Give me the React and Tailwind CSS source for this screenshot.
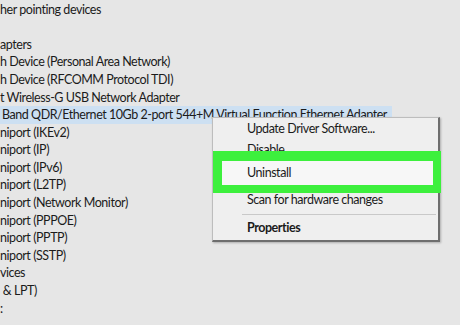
export default function App() {
  const lines = [
    { t: "her pointing devices" },
    { t: "" },
    { t: "apters" },
    { t: "h Device (Personal Area Network)" },
    { t: "h Device (RFCOMM Protocol TDI)" },
    { t: "t Wireless-G USB Network Adapter" },
    { t: "Band QDR/Ethernet 10Gb 2-port 544+M Virtual Function Ethernet Adapter", sel: true },
    { t: "niport (IKEv2)" },
    { t: "niport (IP)" },
    { t: "niport (IPv6)" },
    { t: "niport (L2TP)" },
    { t: "niport (Network Monitor)" },
    { t: "niport (PPPOE)" },
    { t: "niport (PPTP)" },
    { t: "niport (SSTP)" },
    { t: "vices" },
    { t: " & LPT)" },
    { t: ":" },
  ];
  const font = { fontFamily: 'Lato, "Noto Sans", sans-serif' };
  return (
    <div
      className="relative w-[460px] h-[325px] overflow-hidden bg-[#e6e6e6] text-[#1b1b1b]"
      style={font}
    >
      <div className="flex flex-col pt-px">
        {lines.map((l, i) => (
          <div key={i} className="h-[17.6px] flex items-center text-[12.5px] tracking-[-0.45px] leading-none whitespace-pre">
            {l.sel ? (
              <span className="bg-[#cde0f2] h-[18px] flex items-center pl-[2px] pr-[5px]">{l.t}</span>
            ) : (
              <span>{l.t}</span>
            )}
          </div>
        ))}
      </div>

      {/* context menu */}
      <div className="absolute left-[212px] top-[117px] w-[228px] h-[125px] bg-[#efefef] border border-[#bdbdbd] border-r-[2px] border-b-[2px] border-r-[#6e6e6e] border-b-[#6e6e6e] shadow-[1px_1px_2px_rgba(0,0,0,0.25)] text-[12.5px] tracking-[-0.45px] leading-none">
        <div className="flex flex-col pl-[34px]">
          <div className="h-[22px] flex items-center">Update Driver Software...</div>
          <div className="h-[21px] flex items-center">Disable</div>
          <div className="h-[22px] flex items-center">Uninstall</div>
          <div className="h-[22px] mt-[6px] flex items-center">Scan for hardware changes</div>
          <div className="h-[6px] flex items-center -ml-[5px] mr-[2px]">
            <div className="h-px w-full bg-[#c9c9c9]" />
          </div>
          <div className="h-[22px] flex items-center font-bold">Properties</div>
        </div>
      </div>

      {/* green highlight */}
      <div
        className="absolute left-[213px] top-[151px] w-[228px] h-[42px] border-[#3df03d] border-l-[9px] border-r-[8px] border-t-[10px] border-b-[8px] bg-[#f7f7f7] flex items-center pl-[25px] text-[12.5px] tracking-[-0.45px] leading-none"
        style={font}
      >
        Uninstall
      </div>
    </div>
  );
}
